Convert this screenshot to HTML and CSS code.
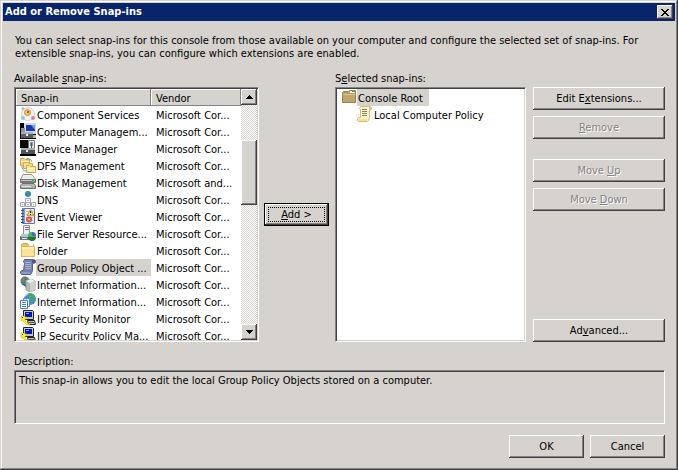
FILE: index.html
```html
<!DOCTYPE html>
<html lang="en">
<head>
<meta charset="utf-8">
<title>Add or Remove Snap-ins</title>
<link rel="stylesheet" href="styles.css">
</head>
<body>
<svg class="defs" aria-hidden="true">
  <symbol id="component" viewBox="0 0 16 16">
    <circle cx="8" cy="8" r="6.500" fill="#f3f1f5" stroke="#d3d1dc"/>
    <circle cx="7.500" cy="6.500" r="3" fill="#f3cf5a" stroke="#c58d2c"/>
    <path d="M7 5h2v2H7z" fill="#b5562f"/>
    <circle cx="3" cy="2.500" r="1.500" fill="#b9b6e6"/>
    <circle cx="3" cy="12" r="2" fill="#8ad3b3"/>
    <circle cx="13" cy="12" r="2" fill="#e77f90"/>
  </symbol>
  <symbol id="computer" viewBox="0 0 16 16">
    <path d="M0 0h16v16H0z" fill="#000"/>
    <path d="M4 0h12v11H4z" fill="#d7d9df"/>
    <path d="M6 2h9v6H6z" fill="#1538b8"/>
    <path d="M11 2h4v5z" fill="#6f9af0"/>
    <path d="M1 5h4v6H1z" fill="#8f959b"/>
    <path d="M1 9h12v6H1z" fill="#565d64"/>
    <path d="M1 9h12v2H1z" fill="#a9afb5"/>
    <path d="M6 11h2v2H6z" fill="#f2f2f2"/>
    <path d="M13 12h3v3h-3z" fill="#b5b5b5"/>
  </symbol>
  <symbol id="device" viewBox="0 0 16 16">
    <path d="M0 0h16v16H0z" fill="#fff"/>
    <path d="M0 0h8v8H0z" fill="#000"/>
    <path d="M8.500.5h6v10h-6z" fill="#e6e8ea" stroke="#6d7378"/>
    <path d="M10 2h3v4h-3z" fill="#8e979d"/>
    <path d="M11.500 3v6" stroke="#2c6c3c"/>
    <path d="M1 8h14v6H1z" fill="#4d545b"/>
    <path d="M1 8h14v2H1z" fill="#a4aab0"/>
    <path d="M6 10h2v2H6z" fill="#eee"/>
    <path d="M0 14h16v2H0z" fill="#000"/>
  </symbol>
  <symbol id="dfs" viewBox="0 0 16 16">
    <g fill="#f7d776" stroke="#d3a548">
      <path d="M.5 8.500v-7h4l1 1h4v6z"/>
      <path d="M3.500 11.500v-6h4l1 1h4v5z" fill="#f9df8b"/>
      <path d="M6.500 15.500v-7h3l1 1h5v6z" fill="#fae9a0"/>
    </g>
    <path d="M6 2c3-1 5 0 6 3M2 9c0 3 1 5 4 5" fill="none" stroke="#4fb0aa"/>
    <path d="M1 4h7v1H1zM7 11h8v1H7z" fill="#fffbe0"/>
  </symbol>
  <symbol id="disk" viewBox="0 0 16 16">
    <path d="M3 .500h9l3 4v1H0.500z" fill="#ececec" stroke="#9b9b9b"/>
    <path d="M0 5h16v4H0z" fill="#777"/>
    <path d="M1 6h14v1H1z" fill="#c4c4c4"/>
    <path d="M2 9.500h12l1.500 2v3H.5v-3z" fill="#b2b2b2" stroke="#707070"/>
    <path d="M2 12h9v1H2z" fill="#e3e3e3"/>
    <path d="M12 6h2v2h-2z" fill="#29d32e"/>
  </symbol>
  <symbol id="dns" viewBox="0 0 16 16">
    <circle cx="8" cy="3" r="3" fill="#2d7fcf"/>
    <path d="M6 1l2-1 1 2-2 1zM8 4l3-1-1 2z" fill="#3fb64c"/>
    <g fill="#f3f3f7" stroke="#a2a4b4">
      <path d="M5.500 7.500h5v4h-5zM.5 11.500h4v4h-4zM5.500 11.500h5v4h-5zM11.500 11.500h4v4h-4z"/>
    </g>
    <path d="M7 9h2v1H7zM2 13h1v1H2zM7 13h2v1H7zM13 13h1v1h-1z" fill="#b9bccb"/>
  </symbol>
  <symbol id="event" viewBox="0 0 16 16">
    <path d="M2.500.5h12v15h-12z" fill="#e3ebf8" stroke="#5a76a6"/>
    <path d="M3 1h2v14H3z" fill="#7e9bcb"/>
    <path d="M1 2.500h3M1 5.500h3M1 8.500h3M1 11.500h3M1 14.500h3" stroke="#3d5075"/>
    <path d="M6 3.500h7M6 6.500h7M6 9.500h7M6 12.500h7" stroke="#a7bad8"/>
    <path d="M10.500 1.500l3.500 6H7z" fill="#ffd53a" stroke="#d3a11c"/>
    <path d="M10 3h1v2h-1zM10 6h1v1h-1z" fill="#222"/>
    <circle cx="9" cy="11.500" r="3" fill="#d94738"/>
    <path d="M8 10.500l2 2M10 10.500l-2 2" stroke="#fff"/>
  </symbol>
  <symbol id="server" viewBox="0 0 16 16">
    <path d="M3.500.5h6v11h-6z" fill="#eceff0" stroke="#8b969c"/>
    <path d="M5 2h4v1H5zM5 4h4v1H5z" fill="#64727a"/>
    <path d="M0 11h10v4H0z" fill="#65737b"/>
    <path d="M1 9h8v3H1z" fill="#bbc5ca"/>
    <path d="M2 13h5v1H2z" fill="#eef"/>
    <circle cx="12" cy="11" r="4" fill="#48b45c"/>
    <path d="M12 11V7a4 4 0 0 1 4 4z" fill="#3e6fd0"/>
    <path d="M8 12h8a4 4 0 0 1-8 0" fill="#1d7538"/>
  </symbol>
  <symbol id="folder" viewBox="0 0 16 16">
    <path d="M1.500 14.500v-12l1-1h5l1 1h5v12z" fill="#edc660" stroke="#d3a84c"/>
    <path d="M9 2h4v2H9z" fill="#fff"/>
    <path d="M1.500 4.500h13v10h-13z" fill="#fbe39a" stroke="#dcb45a"/>
    <path d="M2 5h12v2H2z" fill="#fff1bd"/>
  </symbol>
  <symbol id="policy" viewBox="0 0 16 16">
    <path d="M4.500.5h9l2 1v2l-2 1h-1v7l-1 3-1 1h-9l-1-1v-2l1-1h2l1-7-1-2z" fill="#7782ab" stroke="#56618e"/>
    <path d="M12 1h3v3h-3z" fill="#4e5a86"/>
    <path d="M5 3.500h6M5 5.500h6M5 7.500h6M5 9.500h6" stroke="#a9b3d2"/>
    <path d="M1 13h9v2H1z" fill="#8f9ac0"/>
  </symbol>
  <symbol id="iis6" viewBox="0 0 16 16">
    <circle cx="5" cy="5" r="4.500" fill="#278a9e"/>
    <path d="M1 4l3-3 1 3-2 3zM6 1l3 2-2 2z" fill="#ba713e"/>
    <path d="M2 8l5 1v3z" fill="#185667"/>
    <path d="M6 5l5-2 4 2v9l-5 2-4-2z" fill="#b4b8b5" stroke="#9a9f9c"/>
    <path d="M6 5l5-2 4 2-5 2z" fill="#eef0ee"/>
    <path d="M10 7l5-2v9l-5 2z" fill="#cfd2cf"/>
  </symbol>
  <symbol id="iis" viewBox="0 0 16 16">
    <circle cx="10" cy="6" r="6" fill="#3d8fd6"/>
    <path d="M9 0l4 1 2 4-4 1-1 5-3-3 2-3zM14 7l2 0-3 4z" fill="#47ad48"/>
    <path d="M5 3l3-2" stroke="#c5e8ff"/>
    <path d="M3.500 5.500h6v8h-6z" fill="#dce9fc" stroke="#5687c8"/>
    <path d="M.5 7.500h7v8h-7z" fill="#fff" stroke="#4779c1"/>
    <path d="M2 9.500h4M2 11.500h4M2 13.500h4" stroke="#4c82cd"/>
  </symbol>
  <symbol id="ipsec" viewBox="0 0 16 16">
    <path d="M3.500.5h9l1 1v8h-9l-1-1z" fill="#c6c6c6" stroke="#222"/>
    <path d="M5 2h7v5H5z" fill="#0018b8"/>
    <path d="M6 3h3v1H6z" fill="#6da1ff"/>
    <path d="M7.500 10.500h7l1 4h-7z" fill="#c4c4c4" stroke="#222"/>
    <path d="M9 12.500h5" stroke="#555"/>
    <path d="M1 6h4v1h2v2H5v2l5 4H7l-4-4H1z" fill="#ffef18" stroke="#b9a900" stroke-width=".5"/>
    <path d="M2 7h1v1H2z" fill="#333"/>
  </symbol>
  <symbol id="root" viewBox="0 0 16 16">
    <path d="M1.500 13.500v-10l1-1h5l1-1h6v12z" fill="#b99b5d" stroke="#9b8048"/>
    <path d="M9 2h5v2H9z" fill="#f5f7fa"/>
    <path d="M11 2h3v1h-3z" fill="#5288bd"/>
    <path d="M2 5h12v8H2z" fill="#c2a669"/>
    <path d="M2 5h12v1H2z" fill="#dfc991"/>
  </symbol>
  <symbol id="scroll" viewBox="0 0 16 16">
    <path d="M3.500.5h9l2 1v2l-2 1v7l-1 3-1 1h-9l-1-1v-2l1-1h2v-8l-1-1z" fill="#fff3c8" stroke="#d3bb7e"/>
    <path d="M12 1h2v3h-2z" fill="#d9c18b"/>
    <path d="M5 3.500h5M5 5.500h5M5 7.500h5M5 9.500h5" stroke="#8d8070"/>
    <path d="M1 13h9v2H1z" fill="#f4dc9b"/>
  </symbol>
</svg>

<main class="dialog">
  <header class="titlebar">
    <h1>Add or Remove Snap-ins</h1>
    <button class="close" aria-label="Close"><svg viewBox="0 0 8 7" width="8" height="7" shape-rendering="crispEdges"><path d="M0 0h2v1H0zM6 0h2v1H6zM1 1h2v1H1zM5 1h2v1H5zM2 2h4v1H2zM3 3h2v1H3zM2 4h4v1H2zM1 5h2v1H1zM5 5h2v1H5zM0 6h2v1H0zM6 6h2v1H6z"/></svg></button>
  </header>

  <div class="content">
    <p class="intro">You can select snap-ins for this console from those available on your computer and configure the selected set of snap-ins. For extensible snap-ins, you can configure which extensions are enabled.</p>

    <div class="picker">
      <h2 id="available">Available <u>s</u>nap-ins:</h2>
      <h2 id="selected" class="selected-label">S<u>e</u>lected snap-ins:</h2>

      <div class="sunken list">
        <div class="viewport">
          <table aria-labelledby="available">
            <thead><tr><th class="name">Snap-in</th><th>Vendor</th></tr></thead>
            <tbody>
              <tr><td><div class="item"><svg><use href="#component"/></svg><span>Component Services</span></div></td><td>Microsoft Cor...</td></tr>
              <tr><td><div class="item"><svg><use href="#computer"/></svg><span>Computer Managem...</span></div></td><td>Microsoft Cor...</td></tr>
              <tr><td><div class="item"><svg><use href="#device"/></svg><span>Device Manager</span></div></td><td>Microsoft Cor...</td></tr>
              <tr><td><div class="item"><svg><use href="#dfs"/></svg><span>DFS Management</span></div></td><td>Microsoft Cor...</td></tr>
              <tr><td><div class="item"><svg><use href="#disk"/></svg><span>Disk Management</span></div></td><td>Microsoft and...</td></tr>
              <tr><td><div class="item"><svg><use href="#dns"/></svg><span>DNS</span></div></td><td>Microsoft Cor...</td></tr>
              <tr><td><div class="item"><svg><use href="#event"/></svg><span>Event Viewer</span></div></td><td>Microsoft Cor...</td></tr>
              <tr><td><div class="item"><svg><use href="#server"/></svg><span>File Server Resource...</span></div></td><td>Microsoft Cor...</td></tr>
              <tr><td><div class="item"><svg><use href="#folder"/></svg><span>Folder</span></div></td><td>Microsoft Cor...</td></tr>
              <tr class="current"><td><div class="item"><svg><use href="#policy"/></svg><span>Group Policy Object ...</span></div></td><td>Microsoft Cor...</td></tr>
              <tr><td><div class="item"><svg><use href="#iis6"/></svg><span>Internet Information...</span></div></td><td>Microsoft Cor...</td></tr>
              <tr><td><div class="item"><svg><use href="#iis"/></svg><span>Internet Information...</span></div></td><td>Microsoft Cor...</td></tr>
              <tr><td><div class="item"><svg><use href="#ipsec"/></svg><span>IP Security Monitor</span></div></td><td>Microsoft Cor...</td></tr>
              <tr><td><div class="item"><svg><use href="#ipsec"/></svg><span>IP Security Policy Ma...</span></div></td><td>Microsoft Cor...</td></tr>
            </tbody>
          </table>
        </div>
        <div class="scrollbar">
          <button aria-label="Scroll up"><svg viewBox="0 0 7 4" width="7" height="4" shape-rendering="crispEdges"><path d="M3 0h1v1H3zM2 1h3v1H2zM1 2h5v1H1zM0 3h7v1H0z"/></svg></button>
          <div class="track"><div class="thumb"></div></div>
          <button aria-label="Scroll down"><svg viewBox="0 0 7 4" width="7" height="4" shape-rendering="crispEdges"><path d="M0 0h7v1H0zM1 1h5v1H1zM2 2h3v1H2zM3 3h1v1H3z"/></svg></button>
        </div>
      </div>

      <button class="button add"><span><u>A</u>dd &gt;</span></button>

      <ul class="sunken tree" aria-labelledby="selected">
        <li><div class="item current"><svg><use href="#root"/></svg><span>Console Root</span></div>
          <ul><li><div class="item"><svg><use href="#scroll"/></svg><span>Local Computer Policy</span></div></li></ul>
        </li>
      </ul>

      <div class="actions">
        <button class="button">Edit E<u>x</u>tensions...</button>
        <button class="button" disabled><u>R</u>emove</button>
        <button class="button group" disabled>Move <u>U</u>p</button>
        <button class="button" disabled>Move <u>D</u>own</button>
        <button class="button last">Ad<u>v</u>anced...</button>
      </div>
    </div>

    <label class="description-label" for="description">Description:</label>
    <textarea id="description" class="sunken description" readonly>This snap-in allows you to edit the local Group Policy Objects stored on a computer.</textarea>

    <footer class="footer">
      <button class="button">OK</button>
      <button class="button">Cancel</button>
    </footer>
  </div>
</main>
</body>
</html>
```
FILE: styles.css
```css
:root {
  --face: #d6d3ce;
  --shadow: #848284;
  --dark: #424142;
}

* { box-sizing: border-box; }

body, button, textarea {
  font: 11px/13px "DejaVu Sans Condensed", "Noto Sans", sans-serif;
  color: #000;
}

body, h1, h2, p, ul { margin: 0; }

.defs {
  position: absolute;
  width: 0;
  height: 0;
}

.dialog {
  display: flex;
  flex-direction: column;
  height: 100vh;
  padding: 3px;
  background: var(--face);
  box-shadow: inset -1px -1px var(--dark), inset 1px 1px var(--face), inset -2px -2px var(--shadow), inset 2px 2px #fff;
}

.titlebar {
  display: flex;
  align-items: center;
  justify-content: space-between;
  height: 18px;
  padding: 0 2px;
  background: #08246b;
}

h1 {
  font-size: 11px;
  line-height: 18px;
  color: #fff;
}

h2 {
  font-size: 11px;
  font-weight: normal;
}

.button, .close, .scrollbar button, .thumb {
  padding: 0;
  border: 0;
  background: var(--face);
  box-shadow: inset -1px -1px var(--dark), inset 1px 1px #fff, inset -2px -2px var(--shadow);
}

.close {
  display: grid;
  place-content: center;
  width: 16px;
  height: 14px;
}

.content {
  display: flex;
  flex: 1;
  flex-direction: column;
  min-height: 0;
  padding: 13px 10px 9px 11px;
}

.intro { padding: 0 20px 0 1px; }

.picker {
  display: grid;
  flex: 1;
  grid-template-columns: 245fr 66px 191fr 134px;
  grid-template-rows: 13px minmax(0, 1fr);
  gap: 2px 5px;
  min-height: 0;
  margin-top: 12px;
}

.selected-label { grid-column: 3 / 5; }

.sunken {
  border: 1px solid;
  border-color: var(--shadow) #fff #fff var(--shadow);
  box-shadow: inset 1px 1px var(--dark), inset -1px -1px var(--face);
  background: #fff;
}

.list {
  display: flex;
  padding: 1px;
}

.viewport {
  flex: 1;
  overflow: hidden;
}

table {
  width: 100%;
  border-collapse: collapse;
  table-layout: fixed;
}

th, td {
  padding: 2px 0 0 5px;
  font-weight: normal;
  line-height: 15px;
  text-align: left;
  white-space: nowrap;
}

th {
  background: var(--face);
  box-shadow: inset -1px -1px var(--shadow), inset 1px 1px #fff;
}

td:first-child { padding: 0 0 0 4px; }

.name { width: 60%; }

.item {
  display: flex;
  height: 17px;
  line-height: 15px;
  white-space: nowrap;
}

.item svg {
  flex: none;
  width: 16px;
  height: 16px;
}

.item span { padding: 2px 0 0 1px; }

tr.current span {
  flex: 1;
  background: var(--face);
}

.scrollbar {
  display: flex;
  flex-direction: column;
  width: 16px;
}

.scrollbar button {
  display: grid;
  place-content: center;
  height: 16px;
}

.track {
  flex: 1;
  padding-top: 35px;
  background: repeating-conic-gradient(#fff 0 25%, var(--face) 0 50%) 0 0 / 2px 2px;
}

.thumb { height: 65px; }

.button { height: 23px; }

.button:disabled {
  color: var(--shadow);
  text-shadow: 1px 1px #fff;
}

.add {
  align-self: center;
  margin-right: 1px;
  padding: 3px;
  border: 1px solid #000;
}

.add span {
  display: block;
  border: 1px dotted #000;
}

.tree {
  padding: 1px 5px;
  list-style: none;
}

.tree ul {
  padding-left: 16px;
  list-style: none;
}

.tree .current span {
  padding-right: 6px;
  background: var(--face);
}

.actions {
  display: flex;
  flex-direction: column;
  gap: 6px;
  padding-left: 2px;
}

.group { margin-top: 14px; }

.last { margin-top: auto; }

.description-label { margin-top: 13px; }

.description {
  height: 54px;
  margin-top: 2px;
  padding: 3px 4px;
  background: var(--face);
  outline: 0;
  resize: none;
}

.footer {
  display: flex;
  justify-content: flex-end;
  gap: 6px;
  margin-top: 11px;
}

.footer .button { width: 75px; }
```
